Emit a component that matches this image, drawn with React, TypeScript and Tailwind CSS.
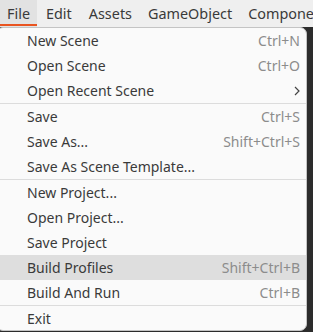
import React from "react";

type Item = { label: string; shortcut?: string; arrow?: boolean; active?: boolean; sepAfter?: boolean };

const items: Item[] = [
  { label: "New Scene", shortcut: "Ctrl+N" },
  { label: "Open Scene", shortcut: "Ctrl+O" },
  { label: "Open Recent Scene", arrow: true, sepAfter: true },
  { label: "Save", shortcut: "Ctrl+S" },
  { label: "Save As...", shortcut: "Shift+Ctrl+S" },
  { label: "Save As Scene Template...", sepAfter: true },
  { label: "New Project..." },
  { label: "Open Project..." },
  { label: "Save Project" },
  { label: "Build Profiles", shortcut: "Shift+Ctrl+B", active: true },
  { label: "Build And Run", shortcut: "Ctrl+B", sepAfter: true },
  { label: "Exit" },
];

export default function App() {
  return (
    <div
      className="relative w-[313px] h-[332px] overflow-hidden bg-[#2c2c2c]"
      style={{ fontFamily: '"Noto Sans", "Open Sans", sans-serif' }}
    >
      <div className="flex h-[27px] bg-[#efefef] text-[14.4px] text-[#3a3a3a] whitespace-nowrap">
        <div className="relative flex items-center px-[7px] bg-[#e2e2e2]">
          File
          <div className="absolute left-0 right-0 bottom-[1px] h-[2px] bg-[#e95420]" />
        </div>
        <div className="flex items-center px-[9px]">Edit</div>
        <div className="flex items-center px-[8px]">Assets</div>
        <div className="flex items-center px-[8px]">GameObject</div>
        <div className="flex items-center px-[8px]">Component</div>
      </div>
      <div className="absolute left-[-4px] top-[27px] w-[311px] h-[304px] rounded-[7px] border border-[#c4c4c4] bg-[#fafafa] text-[14px] text-[#3a3a3a] overflow-hidden">
        {items.map((it) => (
          <React.Fragment key={it.label}>
            <div
              className={`flex items-center justify-between h-[25px] pl-[30px] pr-[6px] ${it.active ? "bg-[#dedede]" : ""}`}
            >
              <span>{it.label}</span>
              {it.shortcut && <span className="text-[#8c8c8c]">{it.shortcut}</span>}
              {it.arrow && (
                <svg width="8" height="12" viewBox="0 0 8 12" className="mr-[-1px]">
                  <path d="M2 2 L6 6 L2 10" fill="none" stroke="#444" strokeWidth="1.2" />
                </svg>
              )}
            </div>
            {it.sepAfter && <div className="h-px bg-[#dcdcdc]" />}
          </React.Fragment>
        ))}
      </div>
    </div>
  );
}
